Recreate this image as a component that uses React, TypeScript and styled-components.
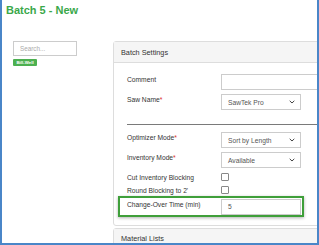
import React from "react";
import styled, { createGlobalStyle } from "styled-components";

const Global = createGlobalStyle`
  html, body { margin: 0; padding: 0; background: #ffffff; }
  * { box-sizing: border-box; }
  body { font-family: "Liberation Sans", Arial, sans-serif; }
`;

const Frame = styled.div`
  width: 319px;
  height: 245px;
  border: 2px solid #4a86c8;
  border-top: none;
  overflow: hidden;
  background: #ffffff;
  font-family: "Liberation Sans", Arial, sans-serif;
`;

const Title = styled.h1`
  margin: 0;
  padding: 3px 0 0 4px;
  font-size: 11px;
  line-height: 14px;
  font-weight: bold;
  color: #3aa84a;
`;

const Layout = styled.div`
  display: flex;
  margin-top: 24px;
`;

const Sidebar = styled.div`
  flex: 0 0 111px;
  padding-left: 11px;
  display: flex;
  flex-direction: column;
  align-items: flex-start;
  gap: 3px;
`;

const SearchBox = styled.div`
  width: 64px;
  height: 15px;
  border: 1px solid #cccccc;
  padding-left: 6px;
  font-size: 6.3px;
  line-height: 13px;
  color: #aaaaaa;
`;

const Badge = styled.span`
  display: inline-block;
  width: 24px;
  height: 7px;
  background: #4cb050;
  border-radius: 1px;
  color: #ffffff;
  font-size: 4.4px;
  font-weight: bold;
  line-height: 7px;
  text-align: center;
`;

const Main = styled.div`
  flex: 0 0 230px;
  display: flex;
  flex-direction: column;
  gap: 2px;
`;

const Panel = styled.section`
  border: 1px solid #dddddd;
  border-radius: 3px;
  background: #ffffff;
`;

const PanelHeader = styled.div<{ $tall?: boolean }>`
  height: ${(p) => (p.$tall ? 30 : 21)}px;
  background: #f5f5f5;
  border-bottom: 1px solid #dddddd;
  padding: ${(p) => (p.$tall ? "5px" : "6px")} 0 0 7px;
  font-size: 7.3px;
  line-height: 10px;
  color: #333333;
`;

const PanelBody = styled.div`
  padding: 11px 0 8px 13px;
  display: flex;
  flex-direction: column;
`;

const FormRow = styled.div<{ $gap?: number }>`
  display: grid;
  grid-template-columns: 94px auto;
  align-items: start;
  margin-top: ${(p) => p.$gap ?? 0}px;
`;

const Label = styled.label<{ $center?: boolean }>`
  font-size: 6.7px;
  line-height: 9px;
  color: #333333;
  padding-top: ${(p) => (p.$center ? 0 : 1)}px;
  align-self: ${(p) => (p.$center ? "center" : "start")};
`;

const Req = styled.span`
  color: #d9302c;
`;

const TextInput = styled.div<{ $wide?: boolean }>`
  width: ${(p) => (p.$wide ? 110 : 80)}px;
  height: 16px;
  border: 1px solid #cccccc;
  padding-left: 6px;
  font-size: 6.7px;
  line-height: 14px;
  color: #555555;
  background: #ffffff;
`;

const Select = styled.div`
  width: 80px;
  height: 16px;
  border: 1px solid #cccccc;
  padding: 0 5px 0 6px;
  display: flex;
  align-items: center;
  justify-content: space-between;
  font-size: 6.7px;
  color: #555555;
  background: #ffffff;
`;

const Check = styled.span`
  width: 8px;
  height: 8px;
  border: 1px solid #888888;
  border-radius: 1px;
  background: #ffffff;
`;

const Rule = styled.hr`
  margin: 14px 0 7px 0;
  border: none;
  border-top: 1px solid #7a7a7a;
  height: 0;
`;

const Highlight = styled.div`
  margin: 1px 0 0 -9px;
  width: 186px;
  height: 21px;
  border: 2px solid #3f9f3a;
  box-shadow: 0 1px 3px rgba(0, 0, 0, 0.3);
  padding: 1px 0 0 7px;
  display: grid;
  grid-template-columns: 94px auto;
  align-items: start;
`;

const Chevron = () => (
  <svg width="6" height="4" viewBox="0 0 6 4">
    <path d="M0.7 0.8 L3 3 L5.3 0.8" fill="none" stroke="#444" strokeWidth="1" />
  </svg>
);

export default function App() {
  return (
    <Frame>
      <Global />
      <Title>Batch 5 - New</Title>
      <Layout>
        <Sidebar>
          <SearchBox>Search...</SearchBox>
          <Badge>Bill-Well</Badge>
        </Sidebar>
        <Main>
          <Panel>
            <PanelHeader>Batch Settings</PanelHeader>
            <PanelBody>
              <FormRow>
                <Label>Comment</Label>
                <TextInput $wide />
              </FormRow>
              <FormRow $gap={4}>
                <Label>
                  Saw Name<Req>*</Req>
                </Label>
                <Select>
                  SawTek Pro
                  <Chevron />
                </Select>
              </FormRow>
              <Rule />
              <FormRow>
                <Label>
                  Optimizer Mode<Req>*</Req>
                </Label>
                <Select>
                  Sort by Length
                  <Chevron />
                </Select>
              </FormRow>
              <FormRow $gap={4}>
                <Label>
                  Inventory Mode<Req>*</Req>
                </Label>
                <Select>
                  Available
                  <Chevron />
                </Select>
              </FormRow>
              <FormRow $gap={5}>
                <Label $center>Cut Inventory Blocking</Label>
                <Check />
              </FormRow>
              <FormRow $gap={4}>
                <Label $center>Round Blocking to 2'</Label>
                <Check />
              </FormRow>
              <Highlight>
                <Label>Change-Over Time (min)</Label>
                <TextInput>5</TextInput>
              </Highlight>
            </PanelBody>
          </Panel>
          <Panel>
            <PanelHeader $tall>Material Lists</PanelHeader>
          </Panel>
        </Main>
      </Layout>
    </Frame>
  );
}
